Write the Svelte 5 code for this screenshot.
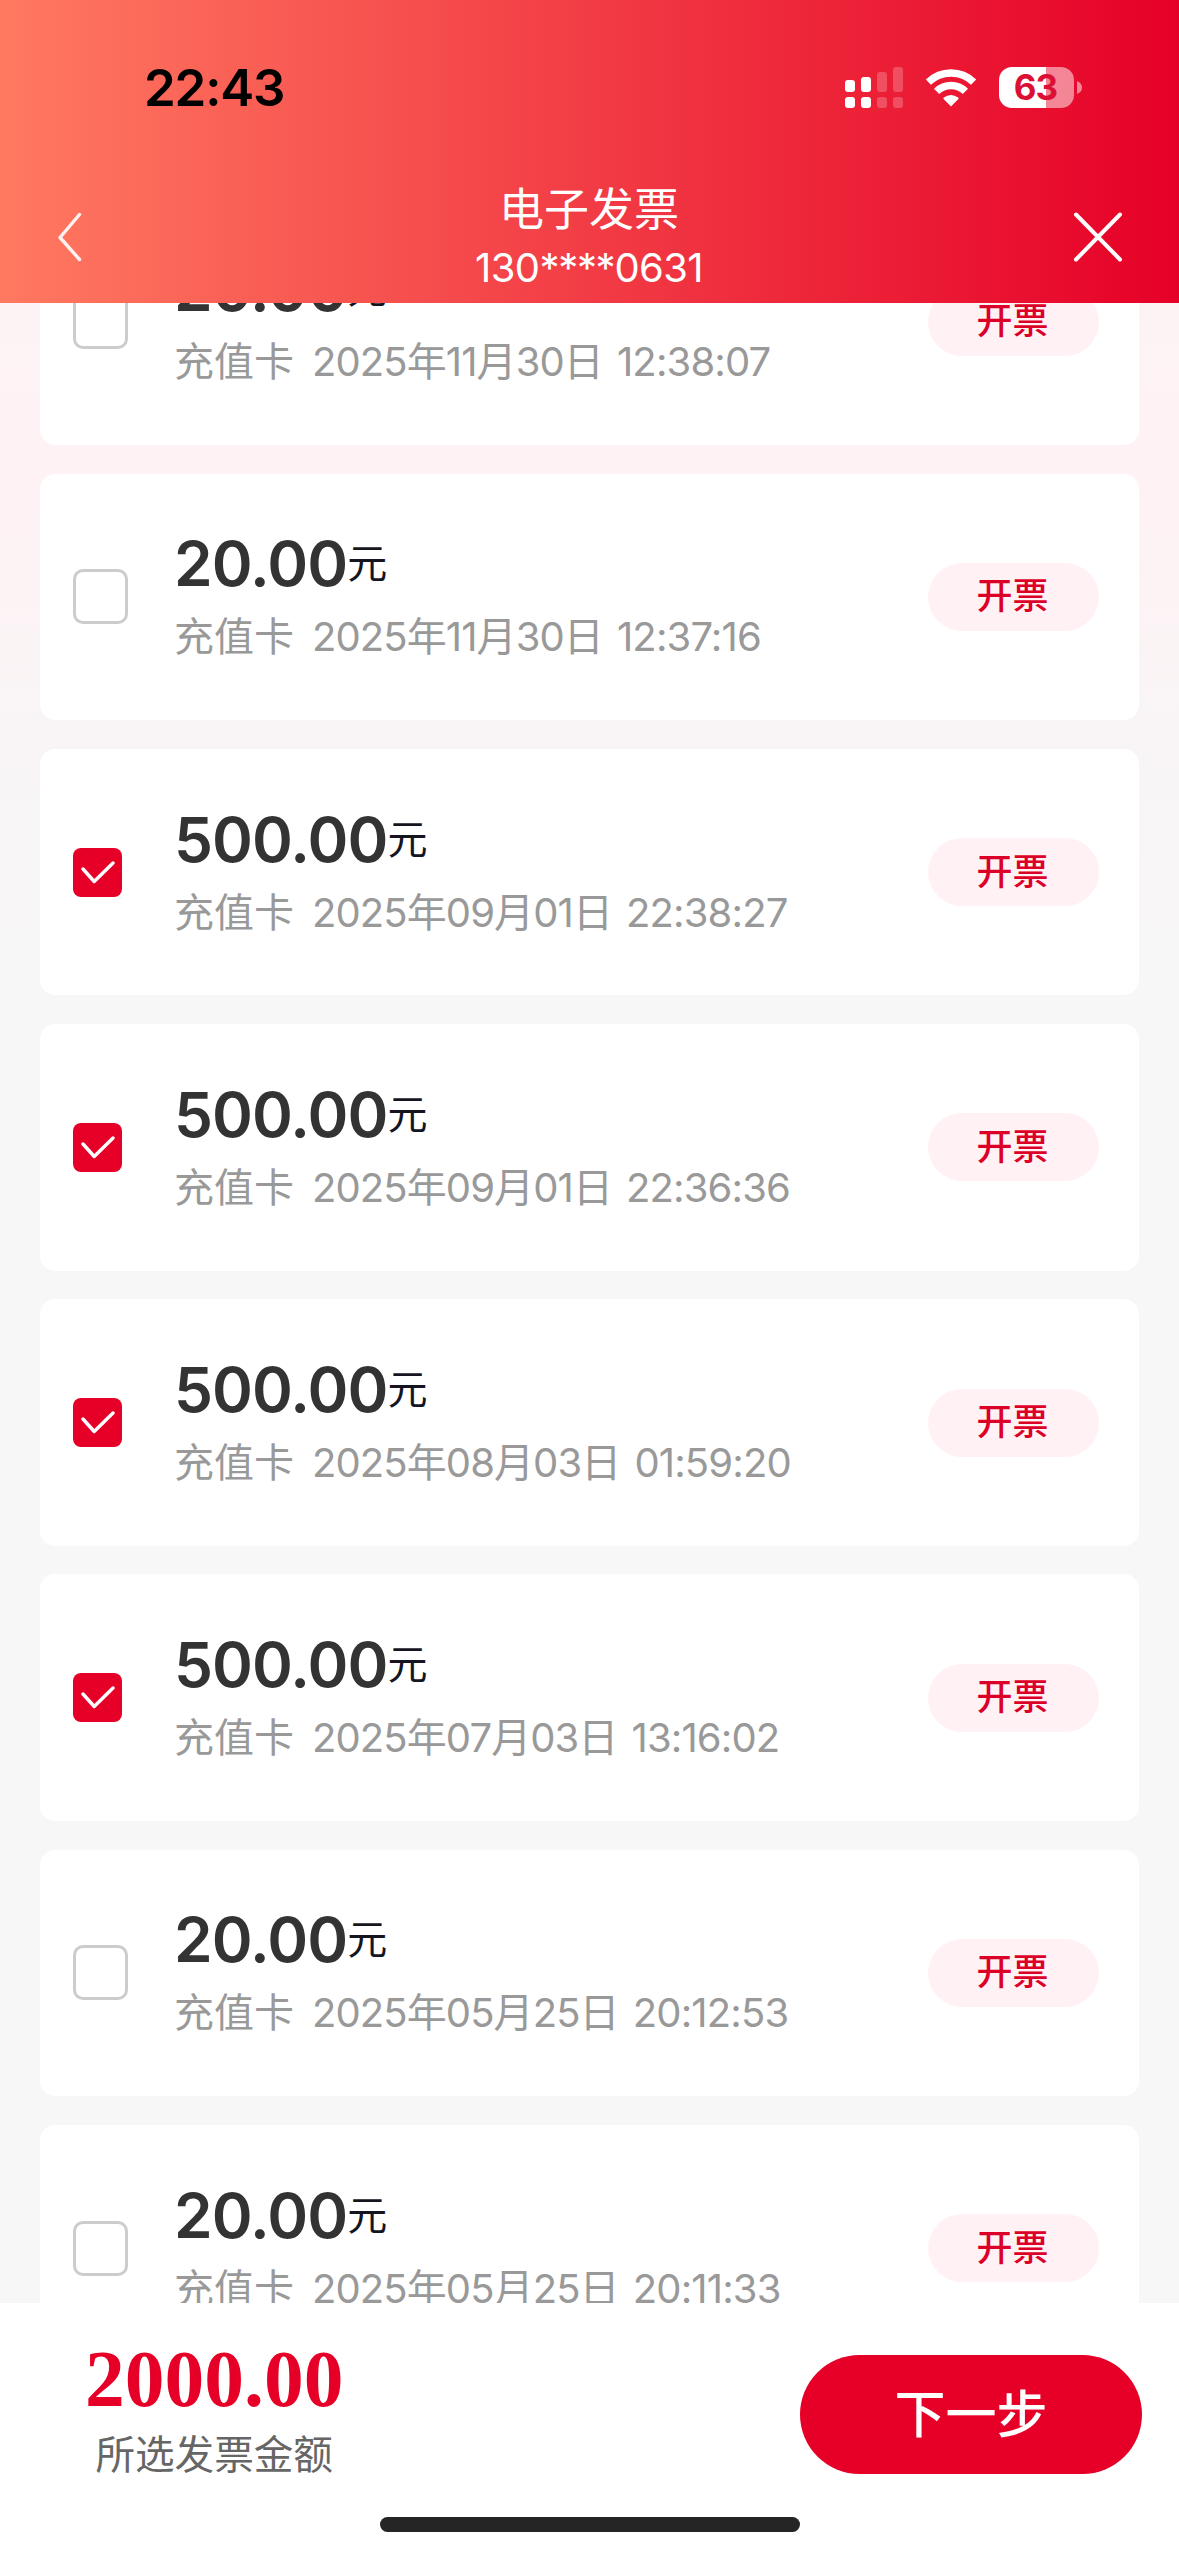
<script>
  const records = [
    { amount: '20.00', date: '2025年11月30日', time: '12:38:07', checked: false },
    { amount: '20.00', date: '2025年11月30日', time: '12:37:16', checked: false },
    { amount: '500.00', date: '2025年09月01日', time: '22:38:27', checked: true },
    { amount: '500.00', date: '2025年09月01日', time: '22:36:36', checked: true },
    { amount: '500.00', date: '2025年08月03日', time: '01:59:20', checked: true },
    { amount: '500.00', date: '2025年07月03日', time: '13:16:02', checked: true },
    { amount: '20.00', date: '2025年05月25日', time: '20:12:53', checked: false },
    { amount: '20.00', date: '2025年05月25日', time: '20:11:33', checked: false }
  ];
</script>

<div class="screen">
  <header>
    <div class="status">
      <span class="clock">22:43</span>
      <div class="indicators">
        <svg class="signal" width="58" height="41" viewBox="0 0 58 41" fill="#fff">
          <rect x="0" y="13" width="10" height="12" rx="3" />
          <rect x="0" y="30" width="10" height="11" rx="3" />
          <rect x="16" y="10" width="10" height="15" rx="3" />
          <rect x="16" y="30" width="10" height="11" rx="3" />
          <g opacity=".22">
            <rect x="32" y="5" width="10" height="20" rx="3" />
            <rect x="32" y="30" width="10" height="11" rx="3" />
            <rect x="48" y="0" width="10" height="25" rx="3" />
            <rect x="48" y="30" width="10" height="11" rx="3" />
          </g>
        </svg>
        <svg class="wifi" width="52" height="38" viewBox="0 0 52 38">
          <g fill="none" stroke="#fff" stroke-width="7.4">
            <path d="M3.4 13.2A32.5 32.5 0 0 1 48.6 13.2" />
            <path d="M11.6 22.4A20.5 20.5 0 0 1 40.4 22.4" />
          </g>
          <path d="M26 37.5L18.6 30Q18 29.2 18.8 28.6Q26 23.2 33.2 28.6Q34 29.2 33.4 30Z" fill="#fff" />
        </svg>
        <div class="battery">
          <div class="cell"><span>63</span></div>
          <svg width="5" height="13" viewBox="0 0 5 13"><path d="M0 0Q5 2 5 6.5T0 13Z" fill="#fff" opacity=".5" /></svg>
        </div>
      </div>
    </div>
    <nav>
      <svg class="back" width="26" height="50" viewBox="0 0 26 50" fill="none" stroke="#fff" stroke-opacity=".9" stroke-width="3.4" stroke-linecap="round" stroke-linejoin="round">
        <path d="M22.5 2.500L3 25.500L22.5 47.500" />
      </svg>
      <div class="heading">
        <h1>电子发票</h1>
        <p>130<span class="mask">****</span>0631</p>
      </div>
      <svg class="close" width="50" height="50" viewBox="0 0 50 50" stroke="#fff" stroke-width="4" stroke-linecap="round">
        <path d="M3 2.500L47 47.500M47 2.500L3 47.500" />
      </svg>
    </nav>
  </header>

  <main>
    {#each records as r}
      <article>
        <div class="pick">
          {#if r.checked}
            <span class="box on">
              <svg width="34" height="23" viewBox="0 0 34 23" fill="none" stroke="#fff" stroke-width="3.4" stroke-linecap="round" stroke-linejoin="round">
                <path d="M2 8L13.200 20.500L32 2" />
              </svg>
            </span>
          {:else}
            <span class="box"></span>
          {/if}
        </div>
        <div class="info">
          <div class="amount"><span>{r.amount}</span><span class="unit">元</span></div>
          <div class="meta"><span>充值卡</span><span>{r.date}</span><span>{r.time}</span></div>
        </div>
        <button class="issue">开票</button>
      </article>
    {/each}
  </main>

  <footer>
    <div class="bar">
      <div class="sum">
        <strong>2000.00</strong>
        <span>所选发票金额</span>
      </div>
      <button class="next">下一步</button>
    </div>
    <div class="home"></div>
  </footer>
</div>

<style>
  :global(body) {
    margin: 0;
  }
  .screen {
    width: 1179px;
    height: 2556px;
    display: flex;
    flex-direction: column;
    overflow: hidden;
    font-family: Inter, 'Noto Sans CJK SC', sans-serif;
    background: linear-gradient(180deg, #fdf3f5 303px, #fff2f4 480px, #f9f5f6 730px, #f8f7f8 1000px, #f7f7f7 1100px);
  }
  header {
    flex: none;
    height: 303px;
    background: linear-gradient(90deg, #ff7961 0%, #f23c45 50%, #e60027 100%);
  }
  .status {
    height: 175px;
    box-sizing: border-box;
    padding: 0 98px 0 144px;
    display: flex;
    justify-content: space-between;
    align-items: center;
  }
  .clock {
    font-size: 51px;
    font-weight: 600;
    line-height: 60px;
    letter-spacing: -1.200px;
    color: #000;
  }
  .indicators {
    display: flex;
    align-items: center;
  }
  .wifi {
    margin-left: 22px;
  }
  .battery {
    margin-left: 22px;
    margin-right: -1px;
    display: flex;
    align-items: center;
    gap: 3px;
  }
  .cell {
    width: 75px;
    height: 41px;
    border-radius: 13px;
    background: linear-gradient(90deg, #fff 47px, rgba(255, 255, 255, 0.5) 47px);
    display: flex;
    align-items: center;
    justify-content: center;
    font-size: 35px;
    font-weight: 700;
    line-height: 41px;
    letter-spacing: -1px;
    color: #dc1035;
  }
  .cell span {
    margin-right: 2px;
  }
  nav {
    height: 128px;
    box-sizing: border-box;
    padding: 0 56px 0 57px;
    display: grid;
    grid-template-columns: 200px 1fr 200px;
  }
  .back,
  .close {
    margin-top: 37px;
  }
  .close {
    justify-self: end;
  }
  .heading {
    padding: 2px 2px 0 0;
    text-align: center;
    color: #fff;
  }
  h1 {
    margin: 0;
    font-size: 45px;
    font-weight: 400;
    line-height: 66px;
  }
  p {
    margin: 0;
    font-size: 40px;
    font-weight: 400;
    line-height: 50px;
    letter-spacing: -0.600px;
  }
  .mask {
    letter-spacing: -1.300px;
  }
  main {
    flex: none;
    height: 1999.700px;
    overflow: hidden;
    box-sizing: border-box;
    padding: 0 40px;
  }
  article {
    height: 246.600px;
    margin-bottom: 28.600px;
    background: #fff;
    border-radius: 15px;
    display: grid;
    grid-template-columns: 102px 1fr auto;
    align-items: center;
    padding: 0 40px 0 33px;
  }
  article:first-child {
    margin-top: -104.500px;
  }
  .pick {
    display: flex;
  }
  .box {
    width: 55px;
    height: 55px;
    box-sizing: border-box;
    border: 3px solid #ccc;
    border-radius: 10px;
  }
  .box.on {
    width: 49px;
    height: 49px;
    border: 0;
    border-radius: 8px;
    background: #e60027;
    display: flex;
    align-items: center;
    justify-content: center;
  }
  .amount {
    display: flex;
    height: 81px;
    margin-left: -1px;
    font-size: 62px;
    font-weight: 600;
    line-height: 77px;
    letter-spacing: -0.900px;
    color: #333;
    white-space: nowrap;
  }
  .unit {
    font-size: 40px;
    font-weight: 400;
    line-height: 78px;
    color: #15151f;
  }
  .meta {
    display: flex;
    margin-left: -1px;
    font-size: 40px;
    line-height: 62px;
    color: #999;
    white-space: nowrap;
  }
  .meta span:nth-child(2) {
    margin-left: 18px;
    letter-spacing: -0.900px;
  }
  .meta span:nth-child(3) {
    margin-left: 14px;
    letter-spacing: -0.850px;
  }
  button {
    font-family: inherit;
    border: 0;
    padding: 0;
  }
  .issue {
    width: 171px;
    height: 68px;
    border-radius: 34px;
    background: #fff1f4;
    color: #dc0028;
    font-size: 36px;
    font-weight: 500;
    line-height: 67px;
    text-indent: -2px;
  }
  footer {
    flex: 1;
    background: #fff;
    display: flex;
    flex-direction: column;
    align-items: center;
  }
  .bar {
    align-self: stretch;
    height: 214px;
    box-sizing: border-box;
    padding: 38px 37px 0 85px;
    display: flex;
    justify-content: space-between;
    align-items: flex-start;
  }
  .sum {
    display: flex;
    flex-direction: column;
    align-items: center;
  }
  .sum strong {
    margin-top: -2px;
    font-family: 'Liberation Serif', serif;
    font-size: 79.500px;
    line-height: 80px;
    color: #e60027;
  }
  .sum span {
    margin-top: 6px;
    font-size: 39.600px;
    line-height: 60px;
    color: #666;
  }
  .next {
    margin-top: 14px;
    width: 342px;
    height: 119px;
    border-radius: 60px;
    background: #e60027;
    color: #fff;
    font-size: 51px;
    font-weight: 500;
    line-height: 119px;
  }
  .home {
    width: 420px;
    height: 15px;
    border-radius: 8px;
    background: #252525;
  }
</style>
